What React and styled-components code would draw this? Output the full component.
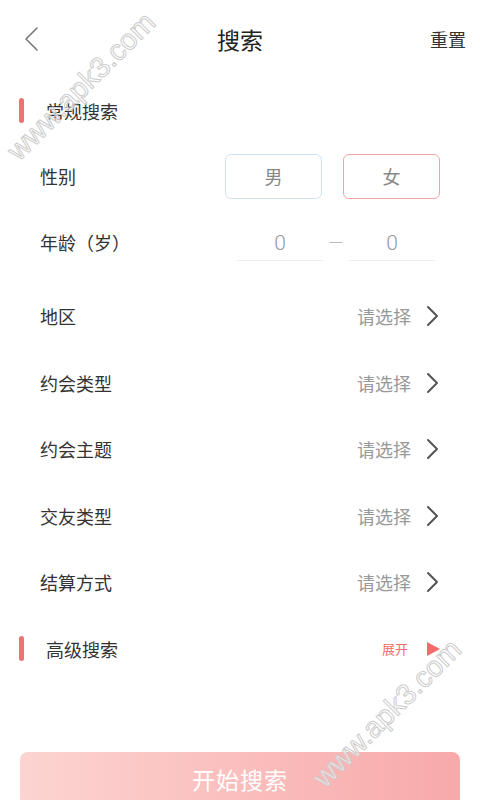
import styled, { createGlobalStyle } from 'styled-components';

const GlobalStyle = createGlobalStyle`
  html, body {
    margin: 0;
    padding: 0;
    background: #fff;
    font-family: "Noto Sans CJK SC", "Noto Sans", sans-serif;
  }
`;

const Page = styled.div`
  position: relative;
  width: 480px;
  height: 800px;
  overflow: hidden;
  background: #fff;
`;

const Header = styled.div`
  height: 78px;
  display: grid;
  grid-template-columns: 80px 1fr 80px;
  align-items: center;
`;

const BackButton = styled.div`
  padding-left: 24px;
  display: flex;
  align-items: center;
`;

const Title = styled.h1`
  margin: 0;
  text-align: center;
  font-size: 23px;
  font-weight: 400;
  color: #222;
`;

const Reset = styled.div`
  text-align: right;
  padding-right: 14px;
  font-size: 18px;
  color: #333;
`;

const SectionHead = styled.div`
  height: ${(p) => p.$h || 65}px;
  display: flex;
  align-items: center;
  padding: 0 40px 0 19px;
`;

const Bar = styled.span`
  width: 5px;
  height: 25px;
  border-radius: 3px;
  background: #f07373;
  margin-right: 22px;
`;

const SectionTitle = styled.span`
  font-size: 18px;
  color: #333;
  flex: 1;
`;

const Expand = styled.span`
  font-size: 13px;
  color: #f06a6a;
  margin-right: 18px;
`;

const Row = styled.div`
  height: ${(p) => p.$h}px;
  display: flex;
  align-items: center;
  padding: 0 40px;
`;

const Label = styled.span`
  flex: 1;
  font-size: 18px;
  color: #333;
`;

const GenderGroup = styled.div`
  display: flex;
  gap: 21px;
`;

const GenderBtn = styled.div`
  width: 95px;
  height: 43px;
  border: 1px solid ${(p) => p.$border};
  border-radius: 6px;
  display: flex;
  align-items: center;
  justify-content: center;
  font-size: 18px;
  color: #888;
`;

const AgeGroup = styled.div`
  display: flex;
  align-items: center;
  margin-right: 5px;
`;

const AgeInput = styled.div`
  width: 86px;
  height: 34px;
  border-bottom: 1px solid #eee;
  display: flex;
  align-items: center;
  justify-content: center;
  font-family: "Roboto", "Noto Sans", sans-serif;
  font-size: 21px;
  font-weight: 300;
  color: #999;
  margin-top: 10px;
`;

const Dash = styled.span`
  width: 26px;
  text-align: center;
  color: #bbb;
  font-size: 16px;
  margin-top: 4px;
`;

const Placeholder = styled.span`
  font-size: 18px;
  color: #999;
  margin-right: 15px;
`;

const StartButton = styled.div`
  margin: 70px 20px 0;
  height: 54px;
  border-radius: 8px;
  background: linear-gradient(90deg, #fcd4d1 0%, #f8a9aa 100%);
  display: flex;
  align-items: center;
  justify-content: center;
  font-size: 23px;
  color: #fff;
  letter-spacing: 1px;
`;

const Watermark = styled.div`
  position: absolute;
  left: ${(p) => p.$x}px;
  top: ${(p) => p.$y}px;
  transform: rotate(-45deg);
  transform-origin: left center;
  font-family: "Liberation Sans", sans-serif;
  font-size: 29px;
  line-height: 34px;
  color: rgba(255, 255, 255, 0.6);
  -webkit-text-stroke: 1px #cccccc;
  pointer-events: none;
  white-space: nowrap;
`;

const Chevron = () => (
  <svg width="14" height="22" viewBox="0 0 14 22">
    <path d="M2 2 L11 11 L2 20" fill="none" stroke="#555" strokeWidth="2" strokeLinecap="round" strokeLinejoin="round" />
  </svg>
);

const selects = ['地区', '约会类型', '约会主题', '交友类型', '结算方式'];

export default function App() {
  return (
    <Page>
      <GlobalStyle />
      <Header>
        <BackButton>
          <svg width="16" height="26" viewBox="0 0 16 26">
            <path d="M13 2 L2 13 L13 24" fill="none" stroke="#777" strokeWidth="1.6" strokeLinecap="round" strokeLinejoin="round" />
          </svg>
        </BackButton>
        <Title>搜索</Title>
        <Reset>重置</Reset>
      </Header>

      <SectionHead>
        <Bar />
        <SectionTitle>常规搜索</SectionTitle>
      </SectionHead>

      <Row $h={66}>
        <Label>性别</Label>
        <GenderGroup>
          <GenderBtn $border="#cfe2f1">男</GenderBtn>
          <GenderBtn $border="#f2a3a3">女</GenderBtn>
        </GenderGroup>
      </Row>

      <Row $h={74}>
        <Label style={{ marginBottom: 8 }}>年龄（岁）</Label>
        <AgeGroup style={{ marginBottom: 16 }}>
          <AgeInput>0</AgeInput>
          <Dash>—</Dash>
          <AgeInput>0</AgeInput>
        </AgeGroup>
      </Row>

      {selects.map((s) => (
        <Row key={s} $h={66.5}>
          <Label>{s}</Label>
          <Placeholder>请选择</Placeholder>
          <Chevron />
        </Row>
      ))}

      <SectionHead $h={66.5}>
        <Bar />
        <SectionTitle>高级搜索</SectionTitle>
        <Expand>展开</Expand>
        <svg width="14" height="14" viewBox="0 0 14 14">
          <path d="M1 0 L14 7 L1 14 Z" fill="#f26b6b" />
        </svg>
      </SectionHead>

      <StartButton>开始搜索</StartButton>

      <Watermark $x={12} $y={138}>www.apk3.com</Watermark>
      <Watermark $x={318} $y={765}>www.apk3.com</Watermark>
    </Page>
  );
}
